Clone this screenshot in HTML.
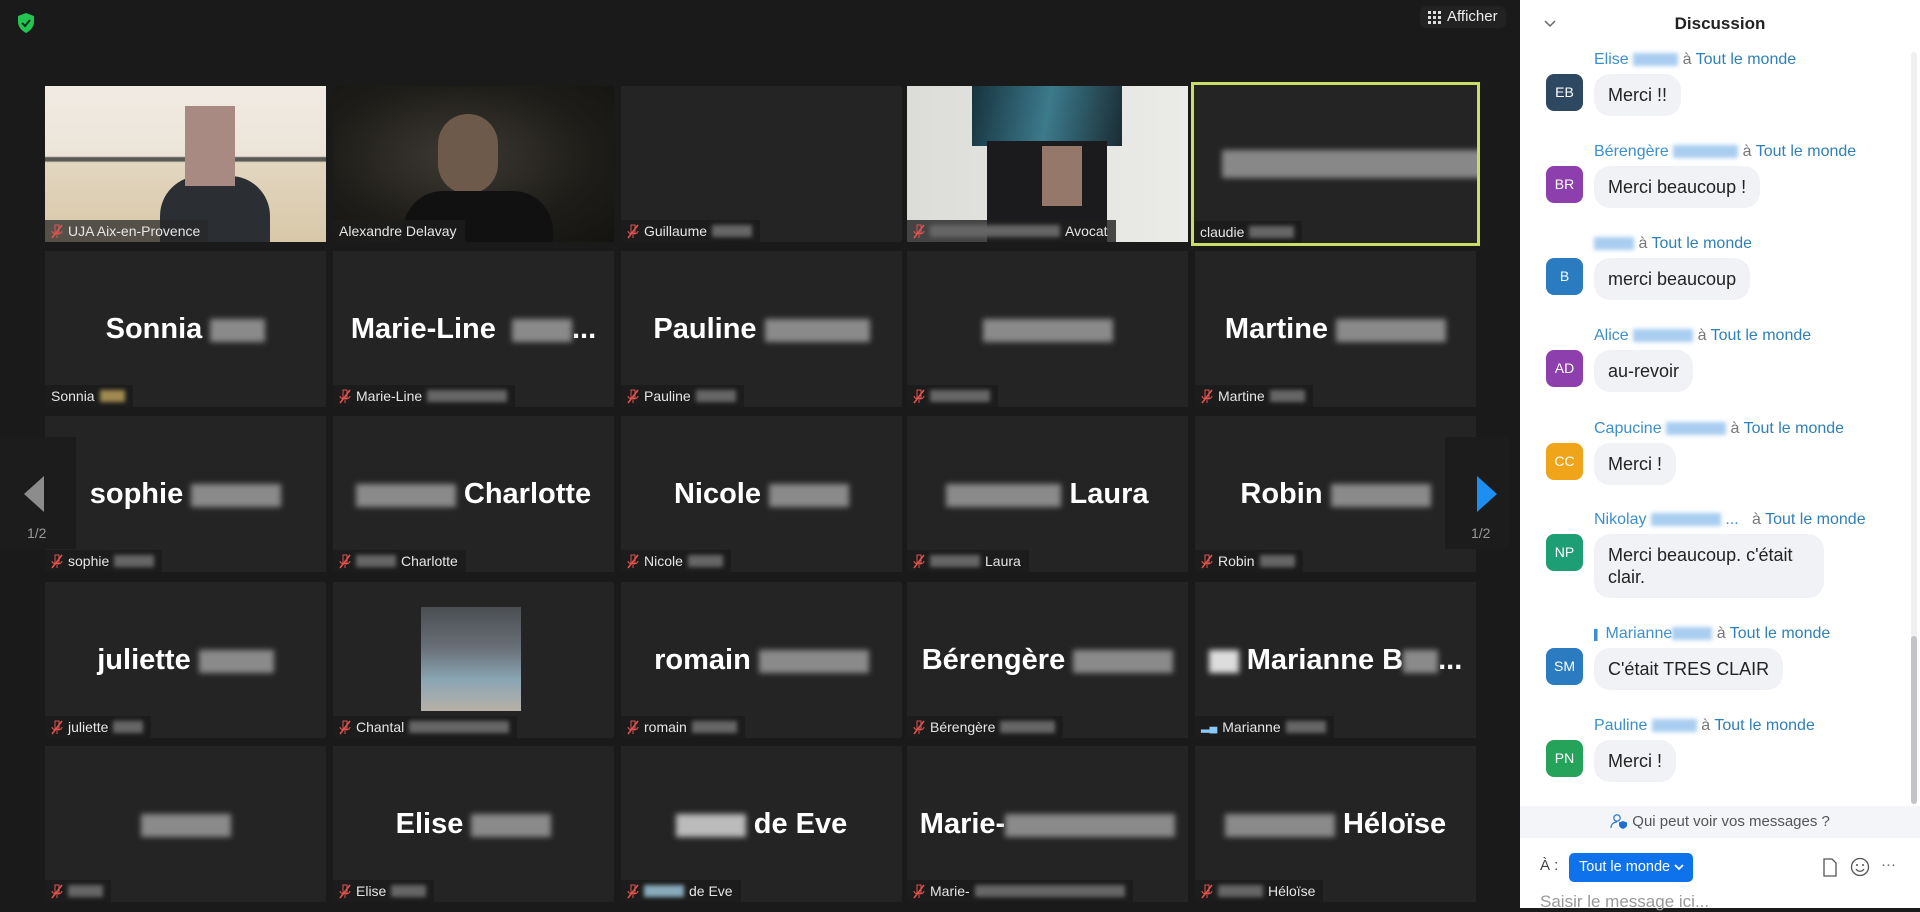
<!DOCTYPE html>
<html><head><meta charset="utf-8"><style>
*{box-sizing:border-box;margin:0;padding:0}
body{width:1920px;height:908px;overflow:hidden;background:#1a1a1a;font-family:"Liberation Sans","DejaVu Sans",sans-serif;position:relative}
.t{position:absolute;width:281px;height:156px;background:#242424;overflow:hidden}
.big{position:absolute;left:0;right:0;top:62px;text-align:center;color:#fff;font-weight:bold;font-size:29px;white-space:nowrap}
.lb{position:absolute;left:0;bottom:0;height:22px;padding:0 8px 0 6px;background:#1c1c1c;color:#e6e6e6;font-size:14px;line-height:22px;white-space:nowrap;display:flex;align-items:center;gap:5px}
.b{display:inline-block;height:.8em;background:#8a8a8a;filter:blur(3px);vertical-align:middle}
.lb .b{background:#666;filter:blur(2px)}
.chat{position:absolute;left:1520px;top:0;width:400px;height:908px;background:#fff}
.msg{position:absolute;left:26px;width:360px}
.nm{margin-left:48px;height:20px;font-size:16px;color:#3b8fcf;white-space:nowrap;line-height:20px}
.nm i{font-style:normal;color:#777}
.nm u{text-decoration:none;color:#2f80b8}
.nm .b{background:#a9cdf0;filter:blur(2px)}
.av{position:absolute;left:0;top:24px;width:37px;height:37px;border-radius:8px;color:#fff;font-size:14px;text-align:center;line-height:37px}
.bu{display:inline-block;margin-left:48px;margin-top:4px;background:#f1f2f6;border-radius:16px;padding:10px 14px;font-size:18px;color:#232323;line-height:22px;max-width:230px}
.nav{position:absolute;background:#1c1c1c;z-index:2}
</style></head><body>

<!-- top bar -->
<svg style="position:absolute;left:16px;top:12px" width="20" height="22" viewBox="0 0 20 22"><path d="M10 1L2 4v6c0 5 4 9 8 11 4-2 8-6 8-11V4z" fill="#23c552"/><path d="M6 11l3 3 5-6" stroke="#10301a" stroke-width="2" fill="none"/></svg>
<div style="position:absolute;left:1420px;top:6px;height:22px;padding:0 8px;border-radius:6px;background:#222;color:#eee;font-size:15px;line-height:22px;display:flex;align-items:center;gap:6px">
<svg width="13" height="13" viewBox="0 0 13 13" fill="#ddd"><rect x="0" y="0" width="3" height="3"/><rect x="5" y="0" width="3" height="3"/><rect x="10" y="0" width="3" height="3"/><rect x="0" y="5" width="3" height="3"/><rect x="5" y="5" width="3" height="3"/><rect x="10" y="5" width="3" height="3"/><rect x="0" y="10" width="3" height="3"/><rect x="5" y="10" width="3" height="3"/><rect x="10" y="10" width="3" height="3"/></svg>Afficher</div>

<!-- Row 1 -->
<div class="t" style="left:45px;top:86px;background:linear-gradient(#f0ebe3 0,#ece4d8 45%,#5a5a55 46%,#5a5a55 48%,#e2d6c0 49%,#d8c8a8 100%)">
 <div style="position:absolute;left:115px;top:90px;width:110px;height:66px;background:#2b2f33;border-radius:40px 40px 0 0"></div>
 <div style="position:absolute;left:140px;top:20px;width:50px;height:80px;background:#a88a82"></div>
 <div class="lb" style="background:rgba(40,40,40,.75)"><svg width="12" height="15" viewBox="0 0 12 15"><path d="M4 1h4v8H4z M1 7c0 4 10 4 10 0 M6 11v3" stroke="#e0524f" fill="none"/><path d="M1 14L11 1" stroke="#e0524f" stroke-width="1.6"/></svg>UJA Aix-en-Provence</div></div>
<div class="t" style="left:333px;top:86px;background:radial-gradient(ellipse at 45% 45%,#3d3a33 0,#1f1d19 60%,#14130f 100%)">
 <div style="position:absolute;left:105px;top:28px;width:60px;height:80px;background:#6d5a4a;border-radius:30px"></div>
 <div style="position:absolute;left:70px;top:105px;width:150px;height:60px;background:#111;border-radius:40px 40px 0 0"></div>
 <div class="lb" style="background:rgba(30,30,30,.75)">Alexandre Delavay</div></div>
<div class="t" style="left:621px;top:86px">
 <div class="lb"><svg width="12" height="15" viewBox="0 0 12 15"><path d="M4 1h4v8H4z M1 7c0 4 10 4 10 0 M6 11v3" stroke="#e0524f" fill="none"/><path d="M1 14L11 1" stroke="#e0524f" stroke-width="1.6"/></svg>Guillaume <span class="b" style="width:40px"></span></div></div>
<div class="t" style="left:907px;top:86px;background:linear-gradient(90deg,#dcdcd8,#ebebe7)">
 <div style="position:absolute;left:65px;top:0;width:150px;height:60px;background:linear-gradient(100deg,#17323d,#3c7a8c,#1a2c33)"></div>
 <div style="position:absolute;left:80px;top:55px;width:120px;height:101px;background:#1b1b1d"></div>
 <div style="position:absolute;left:135px;top:60px;width:40px;height:60px;background:#96786a"></div>
 <div class="lb" style="background:rgba(30,30,30,.8)"><svg width="12" height="15" viewBox="0 0 12 15"><path d="M4 1h4v8H4z M1 7c0 4 10 4 10 0 M6 11v3" stroke="#e0524f" fill="none"/><path d="M1 14L11 1" stroke="#e0524f" stroke-width="1.6"/></svg><span class="b" style="width:130px"></span> Avocat</div></div>
<div class="t" style="left:1191px;top:82px;width:289px;height:164px;border:3px solid #c9df63;background:#242424">
 <div class="big" style="top:62px;left:28px;text-align:left"><span class="b" style="width:270px;height:28px;background:#888"></span></div>
 <div class="lb">claudie <span class="b" style="width:45px"></span></div></div>

<!-- Row 2 -->
<div class="t" style="left:45px;top:251px"><div class="big">Sonnia <span class="b" style="width:55px"></span></div><div class="lb">Sonnia <span class="b" style="width:25px;background:#a08a50"></span></div></div>
<div class="t" style="left:333px;top:251px"><div class="big">Marie-Line &nbsp;<span class="b" style="width:60px"></span>...</div><div class="lb"><svg width="12" height="15" viewBox="0 0 12 15"><path d="M4 1h4v8H4z M1 7c0 4 10 4 10 0 M6 11v3" stroke="#e0524f" fill="none"/><path d="M1 14L11 1" stroke="#e0524f" stroke-width="1.6"/></svg>Marie-Line <span class="b" style="width:80px"></span></div></div>
<div class="t" style="left:621px;top:251px"><div class="big">Pauline <span class="b" style="width:105px"></span></div><div class="lb"><svg width="12" height="15" viewBox="0 0 12 15"><path d="M4 1h4v8H4z M1 7c0 4 10 4 10 0 M6 11v3" stroke="#e0524f" fill="none"/><path d="M1 14L11 1" stroke="#e0524f" stroke-width="1.6"/></svg>Pauline <span class="b" style="width:40px"></span></div></div>
<div class="t" style="left:907px;top:251px"><div class="big"><span class="b" style="width:130px"></span></div><div class="lb"><svg width="12" height="15" viewBox="0 0 12 15"><path d="M4 1h4v8H4z M1 7c0 4 10 4 10 0 M6 11v3" stroke="#e0524f" fill="none"/><path d="M1 14L11 1" stroke="#e0524f" stroke-width="1.6"/></svg><span class="b" style="width:60px"></span></div></div>
<div class="t" style="left:1195px;top:251px"><div class="big">Martine <span class="b" style="width:110px"></span></div><div class="lb"><svg width="12" height="15" viewBox="0 0 12 15"><path d="M4 1h4v8H4z M1 7c0 4 10 4 10 0 M6 11v3" stroke="#e0524f" fill="none"/><path d="M1 14L11 1" stroke="#e0524f" stroke-width="1.6"/></svg>Martine <span class="b" style="width:35px"></span></div></div>

<!-- Row 3 -->
<div class="t" style="left:45px;top:416px"><div class="big">sophie <span class="b" style="width:90px"></span></div><div class="lb"><svg width="12" height="15" viewBox="0 0 12 15"><path d="M4 1h4v8H4z M1 7c0 4 10 4 10 0 M6 11v3" stroke="#e0524f" fill="none"/><path d="M1 14L11 1" stroke="#e0524f" stroke-width="1.6"/></svg>sophie <span class="b" style="width:40px"></span></div></div>
<div class="t" style="left:333px;top:416px"><div class="big"><span class="b" style="width:100px"></span> Charlotte</div><div class="lb"><svg width="12" height="15" viewBox="0 0 12 15"><path d="M4 1h4v8H4z M1 7c0 4 10 4 10 0 M6 11v3" stroke="#e0524f" fill="none"/><path d="M1 14L11 1" stroke="#e0524f" stroke-width="1.6"/></svg><span class="b" style="width:40px"></span> Charlotte</div></div>
<div class="t" style="left:621px;top:416px"><div class="big">Nicole <span class="b" style="width:80px"></span></div><div class="lb"><svg width="12" height="15" viewBox="0 0 12 15"><path d="M4 1h4v8H4z M1 7c0 4 10 4 10 0 M6 11v3" stroke="#e0524f" fill="none"/><path d="M1 14L11 1" stroke="#e0524f" stroke-width="1.6"/></svg>Nicole <span class="b" style="width:35px"></span></div></div>
<div class="t" style="left:907px;top:416px"><div class="big"><span class="b" style="width:115px"></span> Laura</div><div class="lb"><svg width="12" height="15" viewBox="0 0 12 15"><path d="M4 1h4v8H4z M1 7c0 4 10 4 10 0 M6 11v3" stroke="#e0524f" fill="none"/><path d="M1 14L11 1" stroke="#e0524f" stroke-width="1.6"/></svg><span class="b" style="width:50px"></span> Laura</div></div>
<div class="t" style="left:1195px;top:416px"><div class="big">Robin <span class="b" style="width:100px"></span></div><div class="lb"><svg width="12" height="15" viewBox="0 0 12 15"><path d="M4 1h4v8H4z M1 7c0 4 10 4 10 0 M6 11v3" stroke="#e0524f" fill="none"/><path d="M1 14L11 1" stroke="#e0524f" stroke-width="1.6"/></svg>Robin <span class="b" style="width:35px"></span></div></div>

<!-- Row 4 -->
<div class="t" style="left:45px;top:582px"><div class="big">juliette <span class="b" style="width:75px"></span></div><div class="lb"><svg width="12" height="15" viewBox="0 0 12 15"><path d="M4 1h4v8H4z M1 7c0 4 10 4 10 0 M6 11v3" stroke="#e0524f" fill="none"/><path d="M1 14L11 1" stroke="#e0524f" stroke-width="1.6"/></svg>juliette <span class="b" style="width:30px"></span></div></div>
<div class="t" style="left:333px;top:582px"><div style="position:absolute;left:88px;top:25px;width:100px;height:104px;background:linear-gradient(180deg,#4a4e52 0,#6a7078 40%,#8aa6b4 70%,#b7b0a8 100%)"></div><div class="lb"><svg width="12" height="15" viewBox="0 0 12 15"><path d="M4 1h4v8H4z M1 7c0 4 10 4 10 0 M6 11v3" stroke="#e0524f" fill="none"/><path d="M1 14L11 1" stroke="#e0524f" stroke-width="1.6"/></svg>Chantal <span class="b" style="width:100px"></span></div></div>
<div class="t" style="left:621px;top:582px"><div class="big">romain <span class="b" style="width:110px"></span></div><div class="lb"><svg width="12" height="15" viewBox="0 0 12 15"><path d="M4 1h4v8H4z M1 7c0 4 10 4 10 0 M6 11v3" stroke="#e0524f" fill="none"/><path d="M1 14L11 1" stroke="#e0524f" stroke-width="1.6"/></svg>romain <span class="b" style="width:45px"></span></div></div>
<div class="t" style="left:907px;top:582px"><div class="big">Bérengère <span class="b" style="width:100px"></span></div><div class="lb"><svg width="12" height="15" viewBox="0 0 12 15"><path d="M4 1h4v8H4z M1 7c0 4 10 4 10 0 M6 11v3" stroke="#e0524f" fill="none"/><path d="M1 14L11 1" stroke="#e0524f" stroke-width="1.6"/></svg>Bérengère <span class="b" style="width:55px"></span></div></div>
<div class="t" style="left:1195px;top:582px"><div class="big"><span class="b" style="width:30px;background:#ddd"></span> Marianne B<span class="b" style="width:35px"></span>...</div><div class="lb"><span style="color:#8cf;font-size:11px">▂▄</span>Marianne <span class="b" style="width:40px"></span></div></div>

<!-- Row 5 -->
<div class="t" style="left:45px;top:746px"><div class="big"><span class="b" style="width:90px"></span></div><div class="lb"><svg width="12" height="15" viewBox="0 0 12 15"><path d="M4 1h4v8H4z M1 7c0 4 10 4 10 0 M6 11v3" stroke="#e0524f" fill="none"/><path d="M1 14L11 1" stroke="#e0524f" stroke-width="1.6"/></svg><span class="b" style="width:35px"></span></div></div>
<div class="t" style="left:333px;top:746px"><div class="big">Elise <span class="b" style="width:80px"></span></div><div class="lb"><svg width="12" height="15" viewBox="0 0 12 15"><path d="M4 1h4v8H4z M1 7c0 4 10 4 10 0 M6 11v3" stroke="#e0524f" fill="none"/><path d="M1 14L11 1" stroke="#e0524f" stroke-width="1.6"/></svg>Elise <span class="b" style="width:35px"></span></div></div>
<div class="t" style="left:621px;top:746px"><div class="big"><span class="b" style="width:70px;background:#bbb"></span> de Eve</div><div class="lb"><svg width="12" height="15" viewBox="0 0 12 15"><path d="M4 1h4v8H4z M1 7c0 4 10 4 10 0 M6 11v3" stroke="#e0524f" fill="none"/><path d="M1 14L11 1" stroke="#e0524f" stroke-width="1.6"/></svg><span class="b" style="width:40px;background:#8ab"></span> de Eve</div></div>
<div class="t" style="left:907px;top:746px"><div class="big">Marie-<span class="b" style="width:170px"></span></div><div class="lb"><svg width="12" height="15" viewBox="0 0 12 15"><path d="M4 1h4v8H4z M1 7c0 4 10 4 10 0 M6 11v3" stroke="#e0524f" fill="none"/><path d="M1 14L11 1" stroke="#e0524f" stroke-width="1.6"/></svg>Marie-<span class="b" style="width:150px"></span></div></div>
<div class="t" style="left:1195px;top:746px"><div class="big"><span class="b" style="width:110px"></span> Héloïse</div><div class="lb"><svg width="12" height="15" viewBox="0 0 12 15"><path d="M4 1h4v8H4z M1 7c0 4 10 4 10 0 M6 11v3" stroke="#e0524f" fill="none"/><path d="M1 14L11 1" stroke="#e0524f" stroke-width="1.6"/></svg><span class="b" style="width:45px"></span> Héloïse</div></div>

<!-- nav (on top of tiles) -->
<div class="nav" style="left:0;top:437px;width:76px;height:112px"></div>
<svg style="position:absolute;left:22px;top:476px;z-index:3" width="24" height="36"><path d="M22 0L2 18l20 18z" fill="#8c8c8c"/></svg>
<div style="position:absolute;left:27px;top:525px;color:#999;font-size:14px;z-index:3">1/2</div>
<div class="nav" style="left:1445px;top:437px;width:64px;height:112px"></div>
<svg style="position:absolute;left:1475px;top:476px;z-index:3" width="24" height="36"><path d="M2 0l20 18L2 36z" fill="#1d8ff0"/></svg>
<div style="position:absolute;left:1471px;top:525px;color:#999;font-size:14px;z-index:3">1/2</div>

<!-- Chat -->
<div class="chat">
 <svg style="position:absolute;left:24px;top:20px" width="12" height="8"><path d="M1 1l5 5 5-5" stroke="#666" stroke-width="1.5" fill="none"/></svg>
 <div style="position:absolute;left:0;right:0;top:14px;text-align:center;font-weight:bold;font-size:17px;color:#222">Discussion</div>
 <div style="position:absolute;left:391px;top:52px;width:6px;height:752px;background:#f0f0f2;border-radius:3px"><div style="position:absolute;left:0;top:584px;width:6px;height:168px;background:#c4c4c8;border-radius:3px"></div></div>

 <div class="msg" style="top:50px"><div class="nm">Elise <span class="b" style="width:45px"></span> <i>à</i> <u>Tout le monde</u></div><div class="av" style="background:#2d4860">EB</div><div class="bu">Merci !!</div></div>
 <div class="msg" style="top:142px"><div class="nm">Bérengère <span class="b" style="width:65px"></span> <i>à</i> <u>Tout le monde</u></div><div class="av" style="background:#8e3fae">BR</div><div class="bu">Merci beaucoup !</div></div>
 <div class="msg" style="top:234px"><div class="nm"><span class="b" style="width:40px"></span> <i>à</i> <u>Tout le monde</u></div><div class="av" style="background:#2a7bbf">B</div><div class="bu">merci beaucoup</div></div>
 <div class="msg" style="top:326px"><div class="nm">Alice <span class="b" style="width:60px"></span> <i>à</i> <u>Tout le monde</u></div><div class="av" style="background:#8e3fae">AD</div><div class="bu">au-revoir</div></div>
 <div class="msg" style="top:419px"><div class="nm">Capucine <span class="b" style="width:60px"></span> <i>à</i> <u>Tout le monde</u></div><div class="av" style="background:#f0a419">CC</div><div class="bu">Merci !</div></div>
 <div class="msg" style="top:510px"><div class="nm">Nikolay <span class="b" style="width:70px"></span> ... &nbsp;&nbsp;<i>à</i> <u>Tout le monde</u></div><div class="av" style="background:#1e9e74">NP</div><div class="bu">Merci beaucoup. c'était clair.</div></div>
 <div class="msg" style="top:624px"><div class="nm"><span style="color:#3b8fcf;font-size:10px">▌</span> Marianne<span class="b" style="width:40px"></span> <i>à</i> <u>Tout le monde</u></div><div class="av" style="background:#2a7bbf">SM</div><div class="bu">C'était TRES CLAIR</div></div>
 <div class="msg" style="top:716px"><div class="nm">Pauline <span class="b" style="width:45px"></span> <i>à</i> <u>Tout le monde</u></div><div class="av" style="background:#26a35a">PN</div><div class="bu">Merci !</div></div>

 <div style="position:absolute;left:0;top:806px;width:400px;height:32px;background:#f4f5f8;text-align:center;font-size:15px;color:#555;line-height:32px">
  <svg width="18" height="16" viewBox="0 0 18 16" style="vertical-align:-3px"><circle cx="7" cy="5" r="3.2" stroke="#3a7fd0" fill="none" stroke-width="1.3"/><path d="M1 15c0-4 3-6 6-6" stroke="#3a7fd0" fill="none" stroke-width="1.3"/><path d="M13 8l4 1.5v2.5c0 2-2 3-4 4-2-1-4-2-4-4V9.5z" fill="#1f6fd0"/></svg> Qui peut voir vos messages ?</div>
 <div style="position:absolute;left:20px;top:857px;font-size:15px;color:#444">À :</div>
 <div style="position:absolute;left:49px;top:853px;width:124px;height:29px;background:#0e72ed;border-radius:5px;color:#fff;font-size:14.5px;line-height:29px;padding-left:10px">Tout le monde <svg width="10" height="7"><path d="M1 1l4 4 4-4" stroke="#fff" stroke-width="1.8" fill="none"/></svg></div>
 <svg style="position:absolute;left:302px;top:858px" width="16" height="19"><path d="M2 1h8l4 4v13H2z" stroke="#555" stroke-width="1.3" fill="none"/></svg>
 <svg style="position:absolute;left:330px;top:857px" width="20" height="20"><circle cx="10" cy="10" r="8.5" stroke="#555" stroke-width="1.3" fill="none"/><circle cx="7" cy="8" r="1" fill="#555"/><circle cx="13" cy="8" r="1" fill="#555"/><path d="M6 12c2 3 6 3 8 0" stroke="#555" stroke-width="1.3" fill="none"/></svg>
 <div style="position:absolute;left:361px;top:856px;font-size:15px;color:#666">···</div>
 <div style="position:absolute;left:20px;top:892px;font-size:17px;color:#999">Saisir le message ici...</div>
</div>
</body></html>
